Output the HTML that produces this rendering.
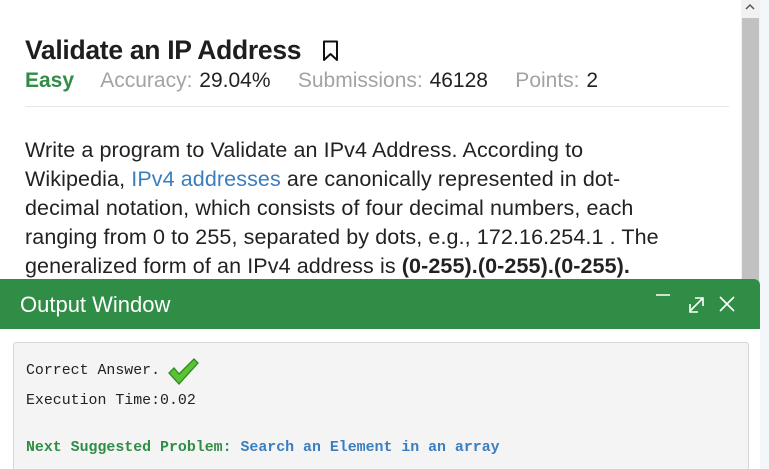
<!DOCTYPE html>
<html><head><style>
body{margin:0;width:769px;height:469px;overflow:hidden;background:#fff;font-family:"Liberation Sans",sans-serif;position:relative}
.t{position:absolute;left:25px;top:35px;font-size:26.5px;font-weight:bold;color:#1e1e1e;letter-spacing:-0.3px}
.meta{position:absolute;left:25px;top:69px;font-size:21px;color:#a3a3a3;white-space:nowrap;letter-spacing:0px;word-spacing:1px}
.meta b{font-weight:normal;color:#222}
.hr{position:absolute;left:25px;top:106px;width:704px;height:1px;background:#e6e6e6}
.p{position:absolute;left:25px;font-size:21.5px;color:#222;white-space:nowrap;letter-spacing:0.1px}
.sb{position:absolute;left:741px;top:0;width:19px;height:469px;background:#f1f1f1}
.th{position:absolute;left:742px;top:18px;width:17px;height:451px;background:#c1c1c1}
.rt{position:absolute;left:760px;top:0;width:9px;height:469px;background:#f3f6fb}
.win{position:absolute;left:0;top:279px;width:760px;height:190px;background:#fff;border-top-right-radius:6px;overflow:hidden}
.hd{height:50px;background:#308d46;color:#fff;font-size:22px;line-height:52px;padding-left:20px;position:relative}
.box{position:absolute;left:13px;top:63px;width:734px;height:140px;background:#f4f4f4;border:1px solid #d6d6d6;border-radius:3px;font-family:"Liberation Mono",monospace;font-size:14.9px;color:#222}
.box div{position:absolute;left:12px;white-space:nowrap}
</style></head><body>
<div class="t">Validate an IP Address
<svg style="position:absolute;left:297px;top:5px" width="18" height="22" viewBox="0 0 18 22"><path d="M2 1.5H15V20L8.5 14L2 20Z" fill="none" stroke="#111" stroke-width="2" stroke-linejoin="round"/></svg></div>
<div class="meta"><span style="color:#2f8d46;font-weight:bold">Easy</span>&nbsp;&nbsp;&nbsp; Accuracy: <b>29.04%</b>&nbsp;&nbsp;&nbsp; Submissions: <b>46128</b>&nbsp;&nbsp;&nbsp; Points: <b>2</b></div>
<div class="hr"></div>
<div class="p" style="top:138px">Write a program to Validate an IPv4 Address. According to</div>
<div class="p" style="top:167px">Wikipedia, <span style="color:#3a7ebf">IPv4 addresses</span> are canonically represented in dot-</div>
<div class="p" style="top:196px">decimal notation, which consists of four decimal numbers, each</div>
<div class="p" style="top:225px">ranging from 0 to 255, separated by dots, e.g., 172.16.254.1 . The</div>
<div class="p" style="top:254px">generalized form of an IPv4 address is <b>(0-255).(0-255).(0-255).</b></div>
<div class="sb"></div><div class="th"></div>
<svg style="position:absolute;left:745px;top:3px" width="10" height="8"><path d="M1 6L5 2L9 6" fill="none" stroke="#555" stroke-width="1.5"/></svg>
<div class="rt"></div>
<div class="win">
<div class="hd">Output Window
<svg style="position:absolute;left:654px;top:12px" width="90" height="24" viewBox="0 0 90 24"><path d="M2 4H16" stroke="#fff" stroke-width="1.6"/><path d="M36 20L48 8M41 7H49V15M36 13V21H44" fill="none" stroke="#fff" stroke-width="1.6"/><path d="M66 6L80 20M80 6L66 20" stroke="#fff" stroke-width="1.6"/></svg></div>
<div class="box">
<div style="top:20px">Correct Answer.</div>
<svg style="position:absolute;left:154px;top:15px" width="32" height="28" viewBox="0 0 32 28"><path d="M1 15L6 10L11 16L26 1L30 5L11 26Z" fill="#5bc236" stroke="#2e8a1c" stroke-width="1.3"/></svg>
<div style="top:50px">Execution Time:0.02</div>
<div style="top:97px;font-weight:bold;color:#2f8d46">Next Suggested Problem: <span style="color:#3a7ebf">Search an Element in an array</span></div>
</div>
</div>
</body></html>
